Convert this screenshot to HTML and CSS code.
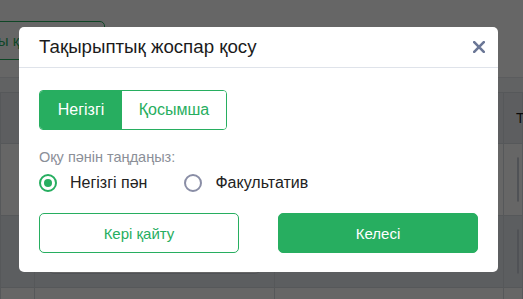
FILE: index.html
```html
<!DOCTYPE html>
<html lang="kk">
<head>
    <meta charset="UTF-8">
    <meta name="viewport" content="width=device-width, initial-scale=1.0">
    <title>Тақырыптық жоспар</title>
    <link rel="stylesheet" href="styles.css">
</head>
<body>
    <div class="page">
        <div class="toolbar">
            <button class="outline-btn">Жоспарды қосу</button>
        </div>
        <div class="strip"></div>
        <table class="plan-table">
            <thead>
                <tr>
                    <th class="col-num"></th>
                    <th class="col-name"></th>
                    <th class="col-hours"></th>
                    <th class="col-last">Т</th>
                </tr>
            </thead>
            <tbody>
                <tr>
                    <td></td>
                    <td><div class="cell-box"></div></td>
                    <td></td>
                    <td><div class="cell-box"></div></td>
                </tr>
                <tr class="striped">
                    <td></td>
                    <td><div class="cell-box"></div></td>
                    <td></td>
                    <td><div class="cell-box"></div></td>
                </tr>
                <tr>
                    <td></td>
                    <td><div class="cell-box"></div></td>
                    <td></td>
                    <td><div class="cell-box"></div></td>
                </tr>
            </tbody>
        </table>
    </div>

    <div class="overlay">
        <div class="modal">
            <div class="modal-header">
                <h3>Тақырыптық жоспар қосу</h3>
                <svg class="close-btn" width="12" height="12" viewBox="0 0 12 12">
                    <path d="M1.2 1.2 L10.8 10.8 M10.8 1.2 L1.2 10.8" stroke="#6b7796" stroke-width="2.6" stroke-linecap="round"/>
                </svg>
            </div>
            <div class="modal-body">
                <div class="tabs">
                    <button class="tab active">Негізгі</button>
                    <button class="tab">Қосымша</button>
                </div>
                <p class="field-label">Оқу пәнін таңдаңыз:</p>
                <div class="radio-row">
                    <label class="radio checked"><span class="dot"></span>Негізгі пән</label>
                    <label class="radio"><span class="dot"></span>Факультатив</label>
                </div>
                <div class="actions">
                    <button class="action-btn back-btn">Кері қайту</button>
                    <button class="action-btn next-btn">Келесі</button>
                </div>
            </div>
        </div>
    </div>
</body>
</html>
```

FILE: styles.css
```css
* {
    box-sizing: border-box;
}

body {
    margin: 0;
    font-family: "Liberation Sans", Arial, sans-serif;
    background-color: #fff;
    overflow: hidden;
}

.page {
    width: 523px;
    height: 299px;
    overflow: hidden;
}

.toolbar {
    height: 77px;
    padding-top: 21px;
}

.outline-btn {
    margin-left: -78px;
    height: 39px;
    width: 183px;
    border: 1px solid #27ae60;
    border-radius: 5px;
    background: #fff;
    color: #27ae60;
    font-family: inherit;
    font-size: 15px;
    text-align: left;
    padding-left: 12px;
}

.strip {
    height: 15px;
    background-color: #f2f4f7;
    border-top: 1px solid #e4e7ec;
}

.plan-table {
    width: 100%;
    border-collapse: collapse;
    table-layout: fixed;
}

.plan-table th,
.plan-table td {
    border: 1px solid #d6dbe1;
    padding: 0;
}

.plan-table th {
    height: 51px;
    background-color: #e8ecf1;
    text-align: left;
    font-weight: normal;
    font-size: 14px;
    color: #1a1a1a;
    padding-left: 12px;
}

.plan-table td {
    height: 72px;
    padding: 0 13px;
}

.striped td {
    background-color: #e6ebf1;
}

.col-num { width: 34px; }
.col-name { width: 240px; }
.col-hours { width: 229px; }

.cell-box {
    height: 45px;
    border: 1px solid #c9ced6;
    border-radius: 6px;
    background: #fff;
}

.overlay {
    position: fixed;
    inset: 0;
    background-color: rgba(0, 0, 0, 0.6);
    display: flex;
    align-items: center;
    padding-left: 19px;
}

.modal {
    width: 479px;
    background: #fff;
    border-radius: 5px;
}

.modal-header {
    display: flex;
    align-items: center;
    justify-content: space-between;
    height: 41px;
    padding: 0 13px 0 20px;
    border-bottom: 1px solid #dfe3ea;
}

.modal-header h3 {
    margin: 0;
    font-size: 18.7px;
    font-weight: normal;
    color: #1b1b1b;
}

.close-btn {
    display: block;
}

.modal-body {
    padding: 22px 20px 19px;
}

.tabs {
    display: flex;
    width: 188px;
    height: 40px;
    border: 1px solid #27ae60;
    border-radius: 4px;
    overflow: hidden;
}

.tab {
    border: none;
    background: #fff;
    color: #27ae60;
    font-family: inherit;
    font-size: 16px;
    padding: 0;
    flex: 1;
}

.tab.active {
    flex: 0 0 82px;
    background-color: #27ae60;
    color: #fff;
}

.field-label {
    margin: 19px 0 0;
    font-size: 14.5px;
    line-height: 16px;
    color: #8b8f98;
}

.radio-row {
    display: flex;
    gap: 37px;
    height: 20px;
    margin-top: 8px;
}

.radio {
    display: flex;
    align-items: center;
    gap: 13px;
    font-size: 16px;
    color: #222;
}

.dot {
    width: 18px;
    height: 18px;
    border: 2px solid #8a8ea6;
    border-radius: 50%;
    display: flex;
    align-items: center;
    justify-content: center;
}

.radio.checked .dot {
    border-color: #27ae60;
}

.radio.checked .dot::after {
    content: "";
    width: 8px;
    height: 8px;
    border-radius: 50%;
    background-color: #27ae60;
}

.actions {
    display: flex;
    justify-content: space-between;
    margin-top: 20px;
}

.action-btn {
    width: 200px;
    height: 40px;
    border-radius: 5px;
    font-family: inherit;
    font-size: 15px;
    cursor: pointer;
}

.back-btn {
    background: #fff;
    border: 1px solid #27ae60;
    color: #27ae60;
}

.next-btn {
    background-color: #27ae60;
    border: 1px solid #27ae60;
    color: #fff;
}
```
